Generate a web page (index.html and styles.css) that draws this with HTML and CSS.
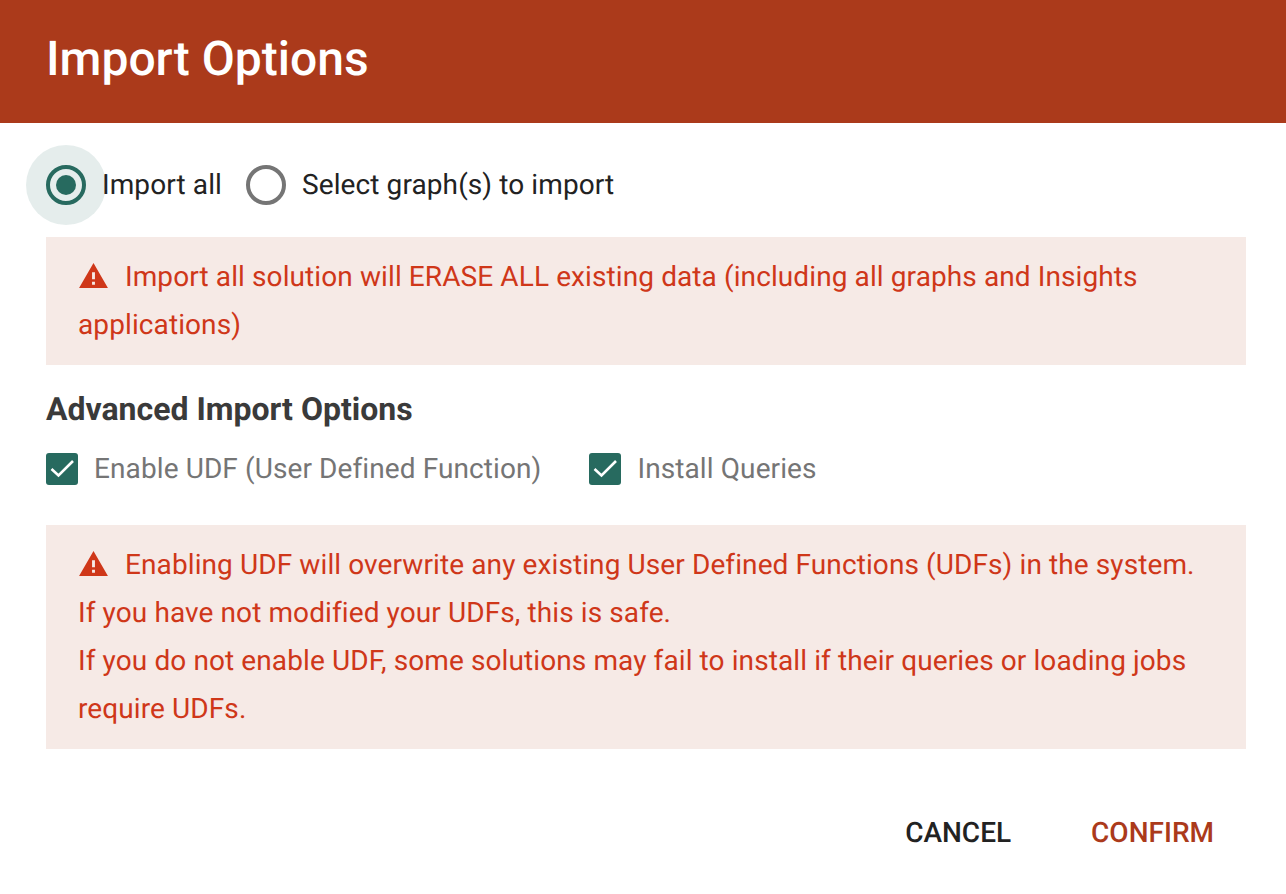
FILE: index.html
```html
<!DOCTYPE html>
<html lang="en">
<head>
    <meta charset="UTF-8">
    <title>Import Options</title>
    <link rel="stylesheet" href="styles.css">
</head>
<body>
    <div class="dialog">
        <div class="dialog-header">Import Options</div>
        <div class="dialog-body">
            <div class="radio-group">
                <label class="radio-option">
                    <span class="radio radio-checked"></span>
                    <span>Import all</span>
                </label>
                <label class="radio-option">
                    <span class="radio"></span>
                    <span>Select graph(s) to import</span>
                </label>
            </div>
            <div class="warning warning-first">
                <svg class="warning-icon" viewBox="0 0 30 26"><path fill-rule="evenodd" d="M15 0 L30 26 L0 26 Z M13.5 9.5 V17 H16.5 V9.5 Z M13.5 19.5 V22.5 H16.5 V19.5 Z"/></svg>Import all solution will ERASE ALL existing data (including all graphs and Insights applications)
            </div>
            <h3 class="section-title">Advanced Import Options</h3>
            <div class="checkbox-group">
                <label class="checkbox-option">
                    <svg class="checkbox" viewBox="0 0 32 32"><rect width="32" height="32" rx="3" fill="#276a5f"/><path d="M5.5 16 L12.5 22.5 L27 8" fill="none" stroke="#fff" stroke-width="2.6"/></svg>
                    <span>Enable UDF (User Defined Function)</span>
                </label>
                <label class="checkbox-option">
                    <svg class="checkbox" viewBox="0 0 32 32"><rect width="32" height="32" rx="3" fill="#276a5f"/><path d="M5.5 16 L12.5 22.5 L27 8" fill="none" stroke="#fff" stroke-width="2.6"/></svg>
                    <span>Install Queries</span>
                </label>
            </div>
            <div class="warning warning-second">
                <div><svg class="warning-icon" viewBox="0 0 30 26"><path fill-rule="evenodd" d="M15 0 L30 26 L0 26 Z M13.5 9.5 V17 H16.5 V9.5 Z M13.5 19.5 V22.5 H16.5 V19.5 Z"/></svg>Enabling UDF will overwrite any existing User Defined Functions (UDFs) in the system.</div>
                <div>If you have not modified your UDFs, this is safe.</div>
                <div>If you do not enable UDF, some solutions may fail to install if their queries or loading jobs require UDFs.</div>
            </div>
        </div>
        <div class="dialog-actions">
            <button class="action">CANCEL</button>
            <button class="action action-primary">CONFIRM</button>
        </div>
    </div>
</body>
</html>
```
FILE: styles.css
```css
html, body {
    margin: 0;
    height: 100%;
    background-color: #fff;
    overflow: hidden;
}
body {
    font-family: 'Roboto', sans-serif;
    font-size: 28px;
    color: #222;
    text-rendering: geometricPrecision;
}
.dialog-header {
    height: 123px;
    line-height: 118px;
    padding-left: 46px;
    background-color: #ab3a1b;
    color: #fff;
    font-size: 48px;
    font-weight: 500;
}
.dialog-body {
    padding: 22px 40px 0 46px;
    letter-spacing: 0.1px;
}
.radio-group {
    display: flex;
    align-items: center;
    gap: 24px;
    height: 80px;
    line-height: 78px;
}
.radio-option {
    display: flex;
    align-items: center;
    gap: 16px;
}
.radio {
    box-sizing: border-box;
    position: relative;
    width: 40px;
    height: 40px;
    border: 4px solid #757575;
    border-radius: 50%;
}
.radio-checked {
    border-color: #276a5f;
}
.radio-checked::before {
    content: "";
    position: absolute;
    left: -24px;
    top: -24px;
    width: 80px;
    height: 80px;
    border-radius: 50%;
    background-color: #276a5f;
    opacity: 0.12;
}
.radio-checked::after {
    content: "";
    position: absolute;
    left: 6px;
    top: 6px;
    width: 20px;
    height: 20px;
    border-radius: 50%;
    background-color: #276a5f;
}
.warning {
    background-color: #f6eae6;
    color: #cf3719;
    line-height: 48px;
    padding: 16px 32px;
}
.warning-first {
    margin-top: 12px;
}
.warning-icon {
    width: 29px;
    height: 25px;
    fill: #cf3719;
    margin-right: 17px;
    margin-left: 1px;
    vertical-align: -2px;
}
.section-title {
    margin: 25px 0 0;
    font-size: 32px;
    line-height: 38px;
    font-weight: 700;
    letter-spacing: 0;
    color: #3a3a3a;
}
.checkbox-group {
    display: flex;
    gap: 48px;
    margin-top: 21px;
    margin-bottom: 36px;
}
.checkbox-option {
    display: flex;
    align-items: center;
    gap: 16px;
    color: #757575;
    line-height: 40px;
}
.checkbox {
    width: 32px;
    height: 32px;
}
.dialog-actions {
    display: flex;
    justify-content: flex-end;
    gap: 80px;
    padding: 64px 72px 0 0;
}
.action {
    padding: 0;
    border: none;
    background: none;
    font-family: inherit;
    font-size: 28px;
    font-weight: 500;
    line-height: 40px;
    color: #222;
    text-rendering: geometricPrecision;
}
.action-primary {
    color: #ab3a1b;
}
```
